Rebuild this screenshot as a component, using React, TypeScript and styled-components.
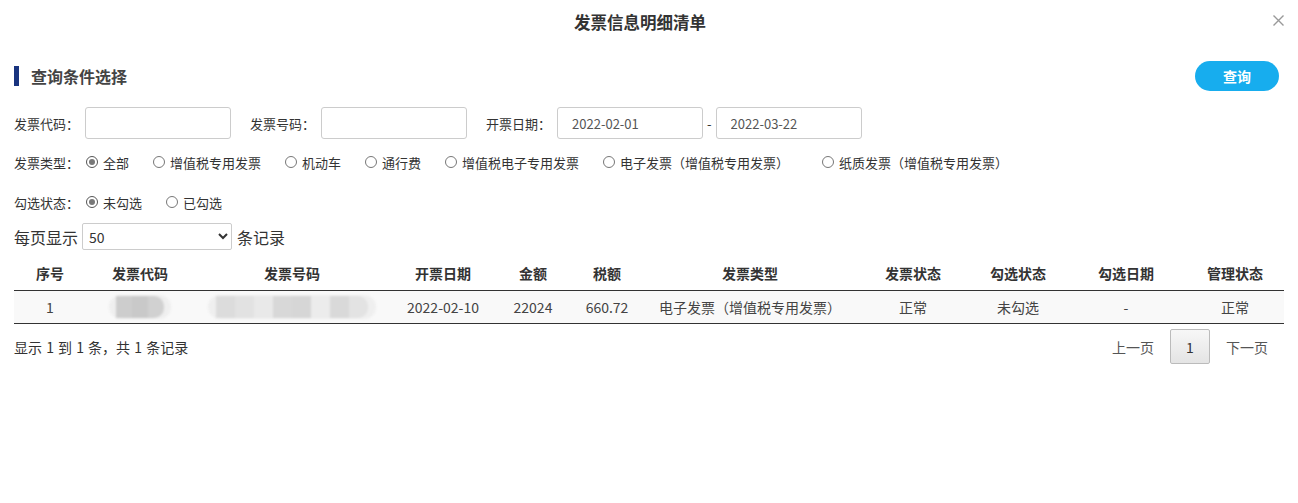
import React from 'react';
import styled, { createGlobalStyle } from 'styled-components';

const GlobalStyle = createGlobalStyle`
  html, body {
    margin: 0;
    padding: 0;
    background: #fff;
  }
  body {
    font-family: "Noto Sans CJK SC", "Liberation Sans", sans-serif;
    color: #333;
  }
  * {
    box-sizing: border-box;
  }
`;

const Page = styled.div`
  width: 1298px;
  padding: 0 14px;
`;

const TitleBar = styled.div`
  display: flex;
  align-items: center;
  height: 44px;
`;

const Title = styled.h1`
  flex: 1;
  margin: 0;
  text-align: center;
  font-size: 16.5px;
  font-weight: bold;
  color: #333;
`;

const CloseButton = styled.button`
  width: 18px;
  height: 20px;
  padding: 0;
  border: none;
  background: transparent;
  display: flex;
  align-items: center;
  justify-content: flex-end;
  margin-top: -4px;
  cursor: pointer;
`;

const SectionHeader = styled.div`
  display: flex;
  align-items: center;
  justify-content: space-between;
  height: 30px;
  margin-top: 17px;
`;

const SectionTitle = styled.h2`
  display: flex;
  align-items: center;
  margin: 0;
  font-size: 16px;
  font-weight: bold;
  color: #444;
  &::before {
    content: '';
    display: block;
    width: 5px;
    height: 20px;
    margin-right: 12px;
    background: #19347f;
  }
`;

const QueryButton = styled.button`
  width: 84px;
  height: 30px;
  margin-right: 5px;
  border: none;
  border-radius: 15px;
  background: #17adee;
  color: #fff;
  font-family: inherit;
  font-size: 14px;
  font-weight: bold;
  cursor: pointer;
`;

const FormRow = styled.div<{ $h: number; $mt: number }>`
  display: flex;
  align-items: center;
  height: ${p => p.$h}px;
  margin-top: ${p => p.$mt}px;
  font-size: 13px;
`;

const Field = styled.div`
  display: flex;
  align-items: center;
  margin-right: 19px;
`;

const Label = styled.span`
  margin-right: 6px;
  white-space: nowrap;
`;

const TextInput = styled.input`
  width: 146px;
  height: 32px;
  padding: 0 14px;
  border: 1px solid #ccc;
  border-radius: 3px;
  font-family: inherit;
  font-size: 13px;
  color: #555;
  outline: none;
`;

const Dash = styled.span`
  margin: 0 4px;
`;

const RadioItem = styled.label<{ $extra?: number }>`
  display: inline-flex;
  align-items: center;
  margin-right: ${p => 17 + (p.$extra || 0)}px;
  white-space: nowrap;
  cursor: pointer;
`;

const RadioDot = styled.span<{ $checked?: boolean }>`
  position: relative;
  width: 12px;
  height: 12px;
  margin: 0 5px 0 7px;
  border-radius: 50%;
  border: 1px solid ${p => (p.$checked ? '#555' : '#777')};
  background: #fff;
  &::after {
    content: '';
    display: ${p => (p.$checked ? 'block' : 'none')};
    position: absolute;
    left: 2px;
    top: 2px;
    width: 6px;
    height: 6px;
    border-radius: 50%;
    background: #777;
  }
`;

const PageSizeRow = styled.div`
  display: flex;
  align-items: center;
  height: 27px;
  margin-top: 6px;
  font-size: 16px;
`;

const PageSelect = styled.select`
  width: 150px;
  height: 27px;
  margin: 0 5px 0 4px;
  padding: 0 2px;
  border: 1px solid #ccc;
  border-radius: 2px;
  background: #fff;
  font-family: inherit;
  font-size: 14px;
  color: #333;
`;

const Table = styled.table`
  width: 1270px;
  margin-top: 6px;
  border-collapse: collapse;
  table-layout: fixed;
  font-size: 14px;
`;

const Th = styled.th`
  height: 34px;
  padding: 0;
  text-align: center;
  font-weight: bold;
  color: #333;
  border-bottom: 1px solid #333;
`;

const Td = styled.td`
  height: 33px;
  padding: 0;
  text-align: center;
  color: #444;
  background: #f9f9f9;
  border-bottom: 1px solid #333;
`;

const Blur = styled.span<{ $w: number }>`
  display: inline-flex;
  align-items: center;
  justify-content: center;
  width: ${p => p.$w}px;
  height: 24px;
  border-radius: 12px;
  background: #efefef;
  filter: blur(0.8px);
  vertical-align: middle;
`;

const BlurBlock = styled.span<{ $c: string; $w: number }>`
  display: block;
  width: ${p => p.$w}px;
  height: 22px;
  background: ${p => p.$c};
  &:last-child {
    border-radius: 0 10px 10px 0;
  }
`;

const Footer = styled.div`
  display: flex;
  align-items: center;
  justify-content: space-between;
  height: 34px;
  margin-top: 6px;
  font-size: 14px;
`;

const Summary = styled.span`
  word-spacing: 1px;
`;

const Pager = styled.div`
  display: flex;
  align-items: center;
`;

const PageLink = styled.span`
  padding: 0 16px;
  color: #555;
`;

const PageBox = styled.span`
  display: flex;
  align-items: center;
  justify-content: center;
  width: 40px;
  height: 35px;
  border: 1px solid #bbb;
  border-radius: 2px;
  background: linear-gradient(#f7f7f7, #e4e4e4);
  color: #333;
`;

const widths = [72, 108, 196, 106, 74, 74, 212, 114, 96, 120, 98];
const headers = ['序号', '发票代码', '发票号码', '开票日期', '金额', '税额', '发票类型', '发票状态', '勾选状态', '勾选日期', '管理状态'];

const invoiceTypes = [
  { label: '全部', checked: true },
  { label: '增值税专用发票' },
  { label: '机动车' },
  { label: '通行费' },
  { label: '增值税电子专用发票' },
  { label: '电子发票（增值税专用发票）', extra: 9 },
  { label: '纸质发票（增值税专用发票）' },
];

const codeShades = ['#cdcdcd', '#c9c9c9', '#d1d1d1'];
const numberShades = ['#dcdcdc', '#e2e2e2', '#e9e9e9', '#d8d8d8', '#d6d6d6', '#ececec', '#d9d9d9', '#e3e3e3'];

const App = () => {
  return (
    <Page>
      <GlobalStyle />
      <TitleBar>
        <Title>发票信息明细清单</Title>
        <CloseButton aria-label="关闭">
          <svg width="11" height="11" viewBox="0 0 11 11">
            <path d="M0.5 0.5 L10.5 10.5 M10.5 0.5 L0.5 10.5" stroke="#999" strokeWidth="1.4" />
          </svg>
        </CloseButton>
      </TitleBar>

      <SectionHeader>
        <SectionTitle>查询条件选择</SectionTitle>
        <QueryButton>查询</QueryButton>
      </SectionHeader>

      <FormRow $h={32} $mt={16}>
        <Field>
          <Label>发票代码：</Label>
          <TextInput />
        </Field>
        <Field>
          <Label>发票号码：</Label>
          <TextInput />
        </Field>
        <Field>
          <Label>开票日期：</Label>
          <TextInput defaultValue="2022-02-01" />
          <Dash>-</Dash>
          <TextInput defaultValue="2022-03-22" />
        </Field>
      </FormRow>

      <FormRow $h={30} $mt={8}>
        <span>发票类型：</span>
        {invoiceTypes.map(t => (
          <RadioItem key={t.label} $extra={t.extra}>
            <RadioDot $checked={t.checked} />
            {t.label}
          </RadioItem>
        ))}
      </FormRow>

      <FormRow $h={30} $mt={10}>
        <span>勾选状态：</span>
        <RadioItem>
          <RadioDot $checked />
          未勾选
        </RadioItem>
        <RadioItem>
          <RadioDot />
          已勾选
        </RadioItem>
      </FormRow>

      <PageSizeRow>
        每页显示
        <PageSelect defaultValue="50">
          <option value="10">10</option>
          <option value="25">25</option>
          <option value="50">50</option>
          <option value="100">100</option>
        </PageSelect>
        条记录
      </PageSizeRow>

      <Table>
        <colgroup>
          {widths.map((w, i) => (
            <col key={i} style={{ width: w }} />
          ))}
        </colgroup>
        <thead>
          <tr>
            {headers.map(h => (
              <Th key={h}>{h}</Th>
            ))}
          </tr>
        </thead>
        <tbody>
          <tr>
            <Td>1</Td>
            <Td>
              <Blur $w={62}>
                {codeShades.map((c, i) => (
                  <BlurBlock key={i} $c={c} $w={16} />
                ))}
              </Blur>
            </Td>
            <Td>
              <Blur $w={168}>
                {numberShades.map((c, i) => (
                  <BlurBlock key={i} $c={c} $w={19} />
                ))}
              </Blur>
            </Td>
            <Td>2022-02-10</Td>
            <Td>22024</Td>
            <Td>660.72</Td>
            <Td>电子发票（增值税专用发票）</Td>
            <Td>正常</Td>
            <Td>未勾选</Td>
            <Td>-</Td>
            <Td>正常</Td>
          </tr>
        </tbody>
      </Table>

      <Footer>
        <Summary>显示 1 到 1 条，共 1 条记录</Summary>
        <Pager>
          <PageLink>上一页</PageLink>
          <PageBox>1</PageBox>
          <PageLink>下一页</PageLink>
        </Pager>
      </Footer>
    </Page>
  );
};

export default App;
